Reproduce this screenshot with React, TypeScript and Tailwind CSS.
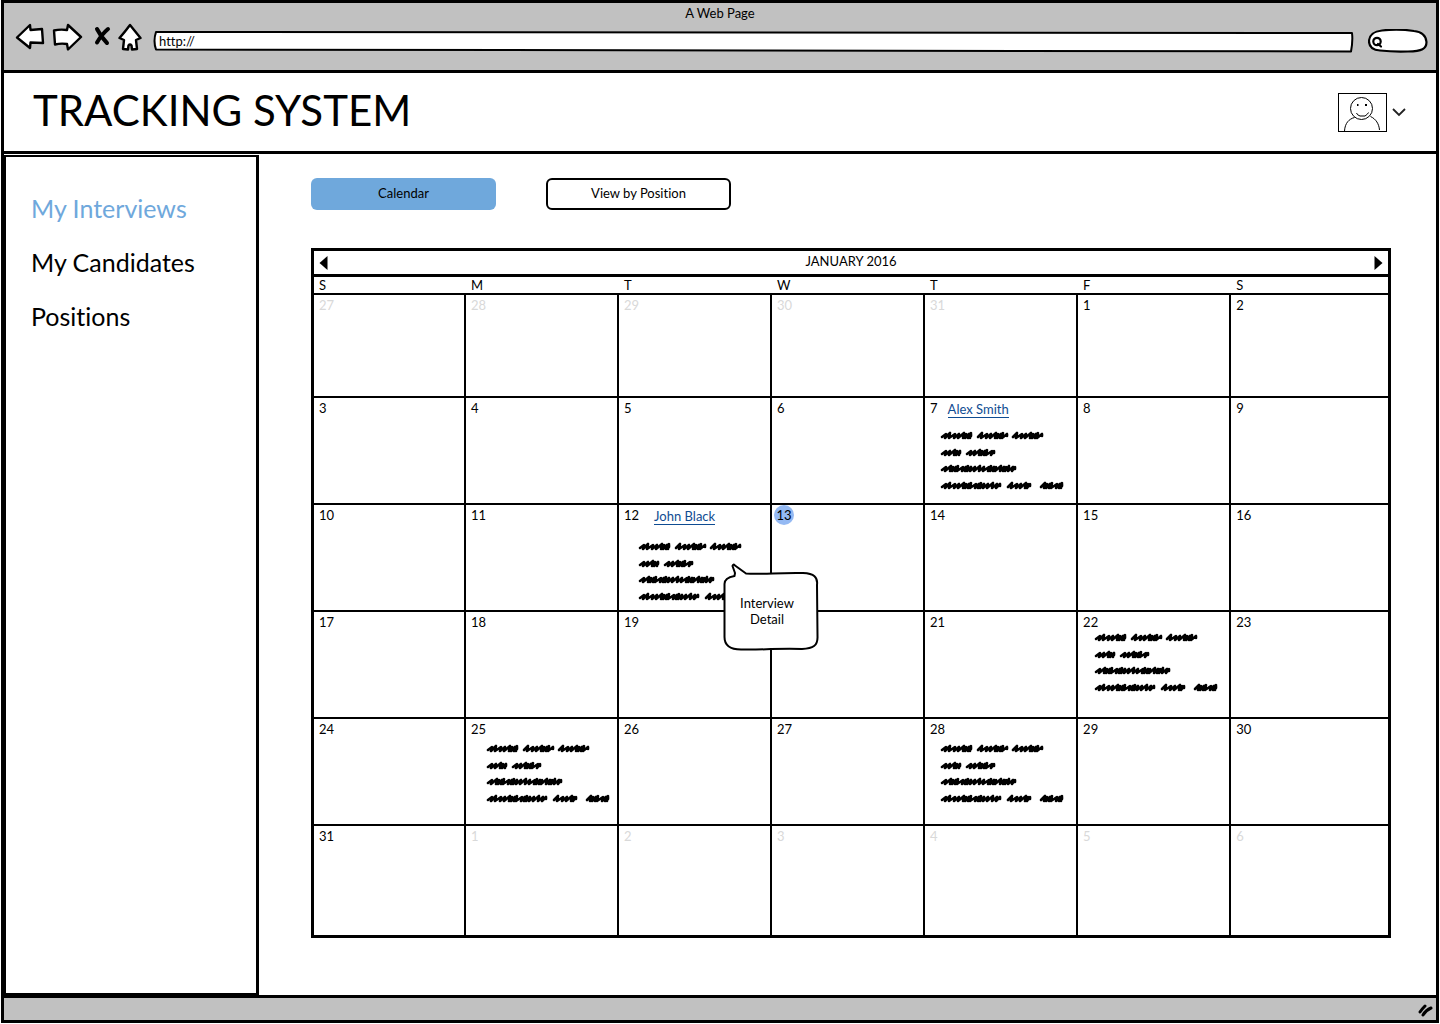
import React from "react";

type Day = {
  day: number;
  muted?: boolean;
  today?: boolean;
  covered?: boolean;
  person?: string;
  notes?: "beside" | "below" | "high" | "middle" | "inset";
  callout?: boolean;
};

const outside = (day: number): Day => ({ day, muted: true });
const plain = (day: number): Day => ({ day });

const weeks: Day[][] = [
  [outside(27), outside(28), outside(29), outside(30), outside(31), plain(1), plain(2)],
  [plain(3), plain(4), plain(5), plain(6), { day: 7, person: "Alex Smith", notes: "beside" }, plain(8), plain(9)],
  [
    plain(10),
    plain(11),
    { day: 12, person: "John Black", notes: "below", callout: true },
    { day: 13, today: true },
    plain(14),
    plain(15),
    plain(16),
  ],
  [plain(17), plain(18), plain(19), { day: 20, covered: true }, plain(21), { day: 22, notes: "high" }, plain(23)],
  [plain(24), { day: 25, notes: "inset" }, plain(26), plain(27), { day: 28, notes: "middle" }, plain(29), plain(30)],
  [plain(31), outside(1), outside(2), outside(3), outside(4), outside(5), outside(6)],
];

const weekdays = ["S", "M", "T", "W", "T", "F", "S"];

const noteSpacing = {
  beside: "pl-[15px] pt-3",
  below: "pl-[19px] pt-4",
  high: "pl-4 pt-0",
  middle: "pl-[15px] pt-1",
  inset: "pl-5 pt-1",
};

// Word positions on each scribbled line: [start, end, baseline]
const scribbleWords: [number, number, number][] = [
  [2, 31, 8], [38, 67, 8], [73, 102, 8],
  [2, 20, 25], [27, 54, 25],
  [2, 75, 41],
  [2, 60, 58], [68, 90, 58], [101, 122, 58],
];

function scribble([start, end, base]: [number, number, number]) {
  const advances = [4, 5, 4, 5, 2, 3, 2, 5, 3, 2, 3];
  let x = start;
  let d = `M${x} ${base - 1}`;
  let i = (start + base) % 5;
  while (x + 4 <= end) {
    const lift = i % 3 === 1 ? 5 : 4;
    d += ` L${x + 4} ${base - lift} L${x + 3} ${base}`;
    x += advances[i % advances.length];
    i += 1;
  }
  return `${d} L${end} ${base - 4} L${end} ${base - 2}`;
}

function Scribble() {
  return (
    <svg width="126" height="64" viewBox="0 0 126 64" fill="none" stroke="black" strokeWidth="2.6" strokeLinecap="round" strokeLinejoin="round" aria-hidden="true">
      {scribbleWords.map((word) => (
        <path key={word.join()} d={scribble(word)} />
      ))}
    </svg>
  );
}

function Callout() {
  return (
    <div className="absolute left-[104px] top-[58px] z-10 flex h-[88px] w-24 items-center justify-center pt-2 text-center text-[13px] leading-4">
      <svg className="absolute inset-0" width="96" height="88" viewBox="0 0 96 88" fill="white" stroke="black" strokeWidth="2" strokeLinejoin="round" aria-hidden="true">
        <path d="M11.500 13 L12 10 L9.500 3 Q10 0.500 12 2.500 L23 10.500 C40 11.500 55 9.500 80 10 C91 10.500 95 14 94 22 L94.500 73 C95 83 90 85.500 79 86 C55 85 45 87 18 86.500 C8 86.500 1.500 83 1.500 74 L1.500 21 C1.500 16 6 14 11.500 13 Z" />
      </svg>
      <span className="relative pr-2">
        Interview
        <br />
        Detail
      </span>
    </div>
  );
}

function BrowserButton({ label, width, children }: { label: string; width: string; children: React.ReactNode }) {
  return (
    <button type="button" aria-label={label} className={`shrink-0 ${width}`}>
      {children}
    </button>
  );
}

const iconProps = {
  height: 28,
  fill: "white",
  stroke: "black",
  strokeWidth: 2.4,
  strokeLinejoin: "round" as const,
  strokeLinecap: "round" as const,
};

function BrowserBar() {
  return (
    <header className="border-b-[3px] border-black bg-[#c1c1c1] pb-[17px]">
      <div className="text-center text-[13px] leading-5">A Web Page</div>
      <div className="flex items-start pl-[11px] pr-2">
        <BrowserButton label="Back" width="w-[30px]">
          <svg {...iconProps} width="30" viewBox="0 0 30 28">
            <path d="M2 14.500 L15 2 L15.500 7 L27 6 L28 20 L15.500 19.500 L15 25 Z" />
          </svg>
        </BrowserButton>
        <BrowserButton label="Forward" width="ml-[7px] w-[31px]">
          <svg {...iconProps} width="31" viewBox="0 0 31 28">
            <path d="M2 7.500 Q8 6 15 7 L16 2 L29 14 L16 26.500 L15 21 Q9 20 3 21.500 Z" />
          </svg>
        </BrowserButton>
        <BrowserButton label="Stop" width="ml-[10px] w-[18px]">
          <svg {...iconProps} width="18" viewBox="0 0 18 28" fill="none" strokeWidth="4">
            <path d="M4 6 Q8 14 14 20 M15 6 Q9 11 4 19.500" />
          </svg>
        </BrowserButton>
        <BrowserButton label="Home" width="ml-[7px] w-6">
          <svg {...iconProps} width="24" viewBox="0 0 24 28">
            <path d="M12 2 L22.500 15 L18 17 L19 26 L14 26.500 L13.500 22.500 Q12 20.500 10.500 22.500 L10 26.500 L5 26 L6 17 L1.500 15 Q6 10 12 2 Z" />
          </svg>
        </BrowserButton>
        <div className="relative ml-[11px] mt-2 h-[22px] flex-1">
          <svg className="absolute inset-0 h-full w-full" viewBox="0 0 1200 22" preserveAspectRatio="none" fill="white" stroke="black" strokeWidth="2" strokeLinejoin="round" aria-hidden="true">
            <path vectorEffect="non-scaling-stroke" d="M3 1 Q500 1 1198 2 Q1199 10 1197 20.500 L600 19.500 L3 18.500 Q0 10 3 1 Z" />
          </svg>
          <input aria-label="Address" defaultValue="http://" className="relative block h-5 w-full bg-transparent px-[6px] text-[13px] leading-5 outline-none" />
        </div>
        <label className="relative ml-[14px] mt-[6px] h-6 w-[60px] shrink-0">
          <svg className="absolute inset-0" width="60" height="24" viewBox="0 0 60 24" fill="white" stroke="black" strokeWidth="2.2" strokeLinecap="round" aria-hidden="true">
            <path d="M14 1.500 Q30 -0.500 46 2 C55 3 58 7 58.500 13 C58.500 20 54 22 40 22.500 Q25 23 12 21.500 C4 21 1 17 1 12 C1.500 5 6 2.500 14 1.500 Z" />
            <circle cx="9" cy="12.500" r="3.700" />
            <path d="M10 15 L13 17.500" />
          </svg>
          <input aria-label="Search" className="relative block h-6 w-full bg-transparent pl-4 pr-2 text-[13px] outline-none" />
        </label>
      </div>
    </header>
  );
}

function AppHeader() {
  return (
    <div className="flex items-center justify-between border-b-[3px] border-black pl-[29px] pr-[30px]">
      <h1 className="pb-1 text-[42px] leading-[74px]">TRACKING SYSTEM</h1>
      <button type="button" aria-label="Account menu" className="flex items-center gap-[5px]">
        <svg width="49" height="39" viewBox="0 0 49 39" fill="none" stroke="black" aria-hidden="true">
          <rect x="0.500" y="0.500" width="48" height="38" />
          <circle cx="23.500" cy="15.500" r="11" />
          <path d="M18.500 20 Q19 22 22 23 L27 23 Q30 21 30.500 19.500 M6.500 38 C7 30 11 26 16.500 24.500 M32.500 23.500 C38 26 41 31 41.500 37" />
          <path d="M19 12 h1.500 M27 12 h2" strokeWidth="1.800" />
        </svg>
        <svg width="14" height="9" viewBox="0 0 14 9" fill="none" stroke="#222" strokeWidth="1.800" aria-hidden="true">
          <path d="M1 1 L7 7 L13 1" />
        </svg>
      </button>
    </div>
  );
}

function Sidebar() {
  return (
    <nav className="mt-px w-[255px] shrink-0 border-2 border-r-[3px] border-black pl-[25px] pt-6 text-[25px]">
      <ul>
        <li><a href="#interviews" className="block leading-[54px] text-[#6fa8dc]">My Interviews</a></li>
        <li><a href="#candidates" className="block leading-[54px]">My Candidates</a></li>
        <li><a href="#positions" className="block leading-[54px]">Positions</a></li>
      </ul>
    </nav>
  );
}

function DayCell({ item, lastColumn, lastRow }: { item: Day; lastColumn: boolean; lastRow: boolean }) {
  return (
    <td
      aria-label={item.covered ? String(item.day) : undefined}
      className={`relative border-black p-0 align-top ${lastColumn ? "" : "border-r-2"} ${lastRow ? "" : "border-b-2"}`}
    >
      <div className="flex items-end pl-[5px] text-[13px] leading-5">
        {item.today && (
          <span className="-ml-[3px] flex size-5 items-center justify-center rounded-full bg-[#94b9f3]">{item.day}</span>
        )}
        {!item.today && !item.covered && <span className={item.muted ? "text-[#d9d9d9]" : ""}>{item.day}</span>}
        {item.person && (
          <a href="#candidate" className={`border-b border-[#0f4c92] leading-4 text-[#0f4c92] ${item.callout ? "ml-[15px]" : "ml-[10px]"}`}>
            {item.person}
          </a>
        )}
      </div>
      {item.notes && (
        <div className={noteSpacing[item.notes]}>
          <Scribble />
        </div>
      )}
      {item.callout && <Callout />}
    </td>
  );
}

function Calendar() {
  return (
    <section className="mt-[38px] border-[3px] border-black text-[13px]">
      <div className="flex items-center justify-between border-b-[3px] border-black px-[5px]">
        <button type="button" aria-label="Previous month">
          <svg width="9" height="14" viewBox="0 0 9 14" aria-hidden="true"><path d="M0.500 7 L8.500 0 V14 Z" /></svg>
        </button>
        <h2 className="pb-[3px] leading-5">JANUARY 2016</h2>
        <button type="button" aria-label="Next month">
          <svg width="9" height="14" viewBox="0 0 9 14" aria-hidden="true"><path d="M8.500 7 L0.500 0 V14 Z" /></svg>
        </button>
      </div>
      <table className="w-full table-fixed border-separate border-spacing-0">
        <thead>
          <tr>
            {weekdays.map((name, i) => (
              <th
                key={i}
                scope="col"
                className={`border-b-2 border-black p-0 pl-[5px] text-left font-normal leading-4 ${i === 0 ? "w-[14.15%]" : i < 6 ? "w-[14.25%]" : ""}`}
              >
                {name}
              </th>
            ))}
          </tr>
        </thead>
        <tbody>
          {weeks.map((week, row) => (
            <tr key={row} className={row === 0 ? "h-[103px]" : row === 5 ? "h-[109px]" : "h-[107px]"}>
              {week.map((item, col) => (
                <DayCell key={col} item={item} lastColumn={col === 6} lastRow={row === 5} />
              ))}
            </tr>
          ))}
        </tbody>
      </table>
    </section>
  );
}

export default function App() {
  return (
    <div className="flex min-h-screen flex-col bg-white px-px pb-px font-['Lato',sans-serif] text-black [font-variant-ligatures:none]">
      <div className="flex flex-1 flex-col border-[3px] border-black">
        <BrowserBar />
        <AppHeader />
        <div className="flex flex-1">
          <Sidebar />
          <main className="min-w-0 flex-1 pb-8 pl-[52px] pr-[45px] pt-6">
            <div className="flex gap-[50px] text-[13px]">
              <button type="button" className="h-8 w-[185px] rounded-md bg-[#6fa8dc]">Calendar</button>
              <button type="button" className="h-8 w-[185px] rounded-md border-2 border-black">View by Position</button>
            </div>
            <Calendar />
          </main>
        </div>
        <footer className="flex justify-end border-t-[3px] border-black bg-[#c1c1c1] py-[3px] pr-[3px]">
          <svg width="16" height="16" viewBox="0 0 16 16" fill="none" stroke="black" strokeWidth="3" strokeLinecap="round" aria-hidden="true">
            <path d="M3 11 Q5 8 8 5 M6 14 Q9 9 14 7" />
          </svg>
        </footer>
      </div>
    </div>
  );
}
